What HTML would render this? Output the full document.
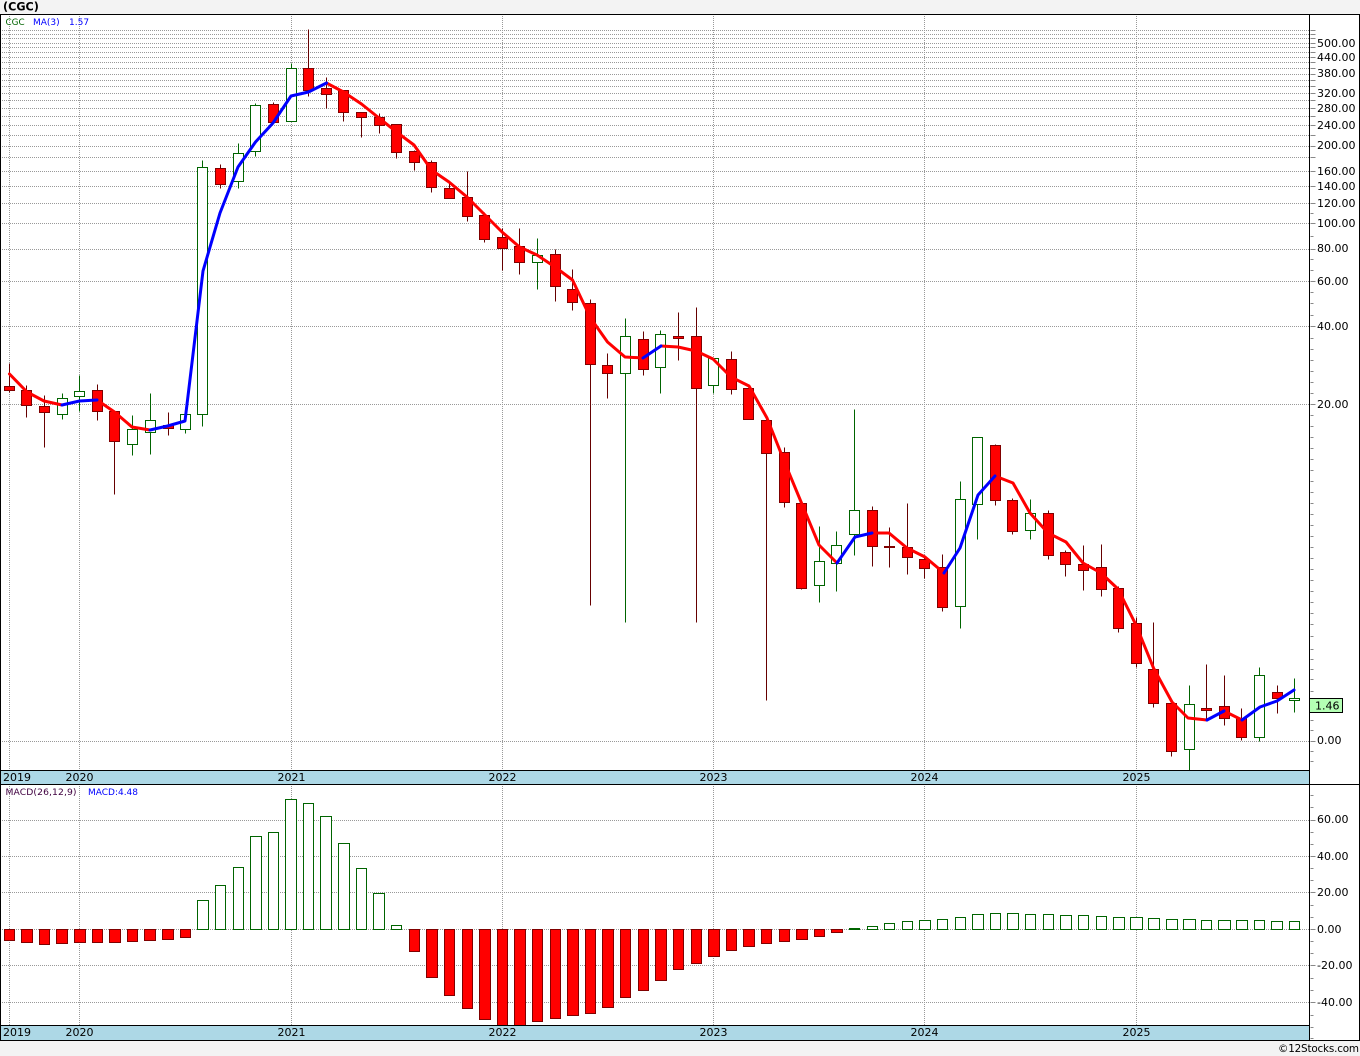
<!DOCTYPE html>
<html><head><meta charset="utf-8"><title>CGC</title>
<style>
html,body{margin:0;padding:0;background:#f3f3f3;width:1360px;height:1056px;overflow:hidden}
svg{display:block}
text{font-family:"DejaVu Sans","Liberation Sans",sans-serif;font-size:11px;fill:#000}
.c{shape-rendering:crispEdges}
</style></head><body>
<svg width="1360" height="1056" viewBox="0 0 1360 1056" xmlns="http://www.w3.org/2000/svg">
<defs>
<pattern id="h" patternUnits="userSpaceOnUse" width="2" height="1"><rect width="1" height="1" fill="#999"/></pattern>
<pattern id="v" patternUnits="userSpaceOnUse" width="1" height="2"><rect width="1" height="1" fill="#999"/></pattern>
</defs>
<rect x="0" y="0" width="1360" height="1056" fill="#f3f3f3"/>
<rect x="1" y="15" width="1358" height="1025" fill="#fff"/>
<text x="3" y="10.5" style="font-weight:bold;font-size:11.2px">(CGC)</text>

<g class="c">
<path fill="url(#h)" d="M1 30h1309v1H1zM1 34h1309v1H1zM1 38h1309v1H1zM1 43h1309v1H1zM1 47h1309v1H1zM1 52h1309v1H1zM1 57h1309v1H1zM1 62h1309v1H1zM1 68h1309v1H1zM1 74h1309v1H1zM1 80h1309v1H1zM1 86h1309v1H1zM1 93h1309v1H1zM1 100h1309v1H1zM1 108h1309v1H1zM1 116h1309v1H1zM1 125h1309v1H1zM1 135h1309v1H1zM1 146h1309v1H1zM1 157h1309v1H1zM1 171h1309v1H1zM1 186h1309v1H1zM1 203h1309v1H1zM1 223h1309v1H1zM1 249h1309v1H1zM1 281h1309v1H1zM1 326h1309v1H1zM1 404h1309v1H1zM1 741h1309v1H1zM1 820h1309v1H1zM1 856h1309v1H1zM1 892h1309v1H1zM1 929h1309v1H1zM1 965h1309v1H1zM1 1002h1309v1H1z"/>
<path fill="url(#v)" d="M9 15h1v755H9zM79 15h1v755h-1zM291 15h1v755h-1zM502 15h1v755h-1zM713 15h1v755h-1zM924 15h1v755h-1zM1136 15h1v755h-1zM9 785h1v240H9zM79 785h1v240h-1zM291 785h1v240h-1zM502 785h1v240h-1zM713 785h1v240h-1zM924 785h1v240h-1zM1136 785h1v240h-1z"/>
</g>

<g class="c" transform="translate(.5,.5)">
<!-- ticks -->
<path fill="none" stroke="#888" d="M1310 30H1315M1310 34H1315M1310 38H1315M1310 43H1315M1310 47H1315M1310 52H1315M1310 57H1315M1310 62H1315M1310 68H1315M1310 74H1315M1310 80H1315M1310 86H1315M1310 93H1315M1310 100H1315M1310 108H1315M1310 116H1315M1310 125H1315M1310 135H1315M1310 146H1315M1310 157H1315M1310 171H1315M1310 186H1315M1310 203H1315M1310 223H1315M1310 249H1315M1310 281H1315M1310 326H1315M1310 404H1315M1310 741H1315M1310 213H1313M1310 236H1313M1310 259H1313M1310 270H1313M1310 292H1313M1310 303H1313M1310 315H1313M1310 338H1313M1310 349H1313M1310 360H1313M1310 371H1313M1310 382H1313M1310 393H1313M1310 415H1313M1310 426H1313M1310 437H1313M1310 448H1313M1310 459H1313M1310 470H1313M1310 481H1313M1310 492H1313M1310 503H1313M1310 514H1313M1310 525H1313M1310 536H1313M1310 547H1313M1310 558H1313M1310 569H1313M1310 580H1313M1310 591H1313M1310 602H1313M1310 613H1313M1310 624H1313M1310 636H1313M1310 649H1313M1310 659H1313M1310 669H1313M1310 679H1313M1310 691H1313M1310 720H1313M1310 730H1313M1310 751H1313M1310 761H1313M1310 795H1313M1310 807H1313M1310 820H1315M1310 832H1313M1310 844H1313M1310 856H1315M1310 868H1313M1310 880H1313M1310 892H1315M1310 905H1313M1310 917H1313M1310 929H1315M1310 941H1313M1310 953H1313M1310 965H1315M1310 978H1313M1310 990H1313M1310 1002H1315M1310 1015H1313M1310 1027H1313M1310 1038H1313"/>

<!-- green candles -->
<path fill="#fff" stroke="#006400" d="M62 393V398M62 414V419M57 398h10V414h-10zM79 375V391M79 396V411M74 391h10V396h-10zM132 415V429M132 444V455M127 429h10V444h-10zM150 393V420M150 432V454M145 420h10V432h-10zM185 407V414M185 429V433M180 414h10V429h-10zM202 160V167M202 414V426M197 167h10V414h-10zM238 143V153M238 181V188M233 153h10V181h-10zM255 103V105M255 151V156M250 105h10V151h-10zM291 63V68M286 68h10V121h-10zM537 238V255M537 262V289M532 255h10V262h-10zM625 318V336M625 373V622M620 336h10V373h-10zM660 330V334M660 367V393M655 334h10V367h-10zM713 385V393M708 358h10V385h-10zM819 526V561M819 585V602M814 561h10V585h-10zM836 531V545M836 563V591M831 545h10V563h-10zM854 409V510M854 534V555M849 510h10V534h-10zM960 481V499M960 606V628M955 499h10V606h-10zM977 504V539M972 437h10V504h-10zM1030 499V513M1030 530V539M1025 513h10V530h-10zM1189 685V704M1189 749V770M1184 704h10V749h-10zM1259 667V675M1259 737V741M1254 675h10V737h-10zM1294 678V698M1294 700V712M1289 698h10V700h-10z"/>

<!-- red wicks -->
<path fill="none" stroke="#660000" d="M9 363V392M26 385V417M44 395V447M97 384V420M114 411V494M168 412V435M220 164V188M273 102V122M308 29V96M326 77V108M343 90V121M361 112V137M379 113V133M396 124V158M414 150V170M431 160V192M449 182V198M467 171V221M484 212V242M502 228V270M519 228V274M555 249V301M572 269V310M590 299V605M607 353V398M643 331V375M678 312V360M696 307V622M731 351V394M748 388V419M766 419V700M784 447V507M801 503V589M872 506V566M889 527V567M907 503V574M924 556V578M942 554V611M995 444V505M1012 498V534M1048 510V559M1065 550V576M1083 545V590M1101 544V596M1118 586V632M1136 617V667M1153 622V707M1171 703V756M1206 664V720M1224 675V725M1241 708V740M1277 685V713"/>
<!-- red bodies -->
<path fill="#f00" stroke="#800000" d="M4 386h10V390h-10zM21 390h10V405h-10zM39 406h10V412h-10zM92 390h10V411h-10zM109 411h10V441h-10zM163 425h10V428h-10zM215 168h10V184h-10zM268 104h10V122h-10zM303 68h10V90h-10zM321 88h10V94h-10zM338 90h10V112h-10zM356 112h10V117h-10zM374 117h10V125h-10zM391 124h10V152h-10zM409 151h10V162h-10zM426 162h10V187h-10zM444 188h10V198h-10zM462 197h10V216h-10zM479 215h10V239h-10zM497 237h10V248h-10zM514 246h10V262h-10zM550 254h10V286h-10zM567 289h10V302h-10zM585 303h10V364h-10zM602 365h10V373h-10zM638 339h10V369h-10zM673 336h10V338h-10zM691 336h10V388h-10zM726 359h10V389h-10zM743 388h10V419h-10zM761 420h10V453h-10zM779 452h10V502h-10zM796 503h10V588h-10zM867 510h10V546h-10zM884 546h10V547h-10zM902 547h10V557h-10zM919 559h10V568h-10zM937 567h10V607h-10zM990 445h10V500h-10zM1007 500h10V531h-10zM1043 513h10V555h-10zM1060 552h10V564h-10zM1078 564h10V570h-10zM1096 567h10V589h-10zM1113 588h10V628h-10zM1131 623h10V663h-10zM1148 669h10V703h-10zM1166 703h10V751h-10zM1201 708h10V710h-10zM1219 706h10V718h-10zM1236 718h10V737h-10zM1272 692h10V698h-10z"/>

<!-- MACD green -->
<path fill="#fff" stroke="#006400" d="M197 900h11V929H197zM215 885h10V929h-10zM233 867h10V929h-10zM250 836h11V929h-11zM268 832h10V929h-10zM285 799h11V929h-11zM303 803h10V929h-10zM320 816h11V929h-11zM338 843h11V929h-11zM356 868h10V929h-10zM373 893h11V929h-11zM391 925h10V929h-10zM849 928h10V929h-10zM867 926h10V929h-10zM884 923h10V929h-10zM902 921h10V929h-10zM919 920h11V929h-11zM937 919h10V929h-10zM955 917h10V929h-10zM972 914h11V929h-11zM990 913h10V929h-10zM1007 913h11V929h-11zM1025 914h10V929h-10zM1043 914h10V929h-10zM1060 915h11V929h-11zM1078 915h10V929h-10zM1096 916h10V929h-10zM1113 917h11V929h-11zM1130 917h12V929h-12zM1148 918h11V929h-11zM1166 919h11V929h-11zM1183 919h12V929h-12zM1201 920h10V929h-10zM1218 920h12V929h-12zM1236 920h11V929h-11zM1254 920h10V929h-10zM1271 921h11V929h-11zM1289 921h10V929h-10z"/>
<!-- MACD red -->
<path fill="#f00" stroke="#800000" d="M4 929h10V940h-10zM21 929h11V942h-11zM39 929h10V944h-10zM56 929h11V943h-11zM74 929h11V942h-11zM92 929h10V942h-10zM109 929h11V942h-11zM127 929h10V941h-10zM144 929h11V940h-11zM162 929h11V939h-11zM180 929h10V937h-10zM409 929h10V951h-10zM426 929h11V977h-11zM444 929h10V995h-10zM462 929h10V1008h-10zM479 929h11V1019h-11zM497 929h10V1030h-10zM514 929h11V1030h-11zM532 929h10V1021h-10zM550 929h10V1018h-10zM567 929h11V1015h-11zM585 929h10V1013h-10zM602 929h11V1007h-11zM620 929h10V997h-10zM638 929h10V990h-10zM655 929h11V980h-11zM673 929h10V969h-10zM691 929h10V963h-10zM708 929h11V956h-11zM726 929h10V950h-10zM743 929h11V946h-11zM761 929h10V943h-10zM779 929h10V941h-10zM796 929h11V939h-11zM814 929h10V936h-10zM831 929h11V932h-11z"/>
</g>

<!-- MA line -->
<g fill="none" stroke-width="3" stroke-linejoin="round" stroke-linecap="round">
<polyline stroke="#f00" points="9.5,374 27,392 44,401 62,405"/>
<polyline stroke="#f00" points="97,400 114.5,412 132,427 150,430"/>
<polyline stroke="#f00" points="326.5,83 343.5,92 361.5,104 379,118 396.5,132 414,145 431.5,170 449,182 467,197 485,215 502,232 519.5,247 537,255 555,267 572.5,280 590.5,318 607.5,342 625,357 643,358"/>
<polyline stroke="#f00" points="661,346 678,347 696,351 713,359 731,377 749,386 767,418 784.5,462 801.5,503 819,545 837,563"/>
<polyline stroke="#f00" points="872,533 889,533 907,548 925,557 944,573"/>
<polyline stroke="#f00" points="995,476 1013,483 1030,513 1048,533 1066,542 1083,563 1101,573 1118,589 1136,625 1153.5,668 1172,702 1188,718 1207,720"/>
<polyline stroke="#f00" points="1224,711 1242,720"/>
<polyline stroke="#00f" points="62,405 79.5,401 97,400"/>
<polyline stroke="#00f" points="150,430 167.5,426 185,421 203,271 220,213 238,167 255.5,142 273,123 291,96 308.5,92 326.5,83"/>
<polyline stroke="#00f" points="643,358 661,346"/>
<polyline stroke="#00f" points="837,563 855,537 872,533"/>
<polyline stroke="#00f" points="944,573 960,548 978,495 995,476"/>
<polyline stroke="#00f" points="1207,720 1224,711"/>
<polyline stroke="#00f" points="1242,720 1260,707 1277,701 1294,690"/>
</g>

<g class="c">
<!-- date strips -->
<rect x="1" y="771" width="1308" height="13" fill="#add8e6"/>
<rect x="1" y="1026" width="1308" height="14" fill="#add8e6"/>
<!-- frame -->
<path fill="#000" d="M0 14H1360V15H0zM0 14H1V1041H0zM1309 14H1310V1041H1309zM1359 14H1360V1041H1359zM0 770H1310V771H0zM0 784H1360V785H0zM0 1025H1310V1026H0zM0 1040H1360V1041H0z"/>
<!-- price label -->
<rect x="1309.5" y="698.5" width="33" height="14" fill="#b4ffb4" stroke="#000"/>
</g>

<text x="1315" y="709.5">1.46</text>
<g>
<text x="1317" y="47">500.00</text>
<text x="1317" y="61">440.00</text>
<text x="1317" y="77">380.00</text>
<text x="1317" y="97">320.00</text>
<text x="1317" y="112">280.00</text>
<text x="1317" y="129">240.00</text>
<text x="1317" y="149">200.00</text>
<text x="1317" y="175">160.00</text>
<text x="1317" y="190">140.00</text>
<text x="1317" y="207">120.00</text>
<text x="1317" y="227">100.00</text>
<text x="1317" y="252">80.00</text>
<text x="1317" y="285">60.00</text>
<text x="1317" y="330">40.00</text>
<text x="1317" y="408">20.00</text>
<text x="1317" y="744">0.00</text>
<text x="1317" y="823">60.00</text>
<text x="1317" y="860">40.00</text>
<text x="1317" y="896">20.00</text>
<text x="1317" y="933">0.00</text>
<text x="1317" y="969">-20.00</text>
<text x="1317" y="1006">-40.00</text>
</g>
<text x="3" y="781">2019</text>
<text x="65.5" y="781">2020</text>
<text x="277.5" y="781">2021</text>
<text x="488.5" y="781">2022</text>
<text x="699.5" y="781">2023</text>
<text x="910.5" y="781">2024</text>
<text x="1122.5" y="781">2025</text>
<text x="3" y="1036">2019</text>
<text x="65.5" y="1036">2020</text>
<text x="277.5" y="1036">2021</text>
<text x="488.5" y="1036">2022</text>
<text x="699.5" y="1036">2023</text>
<text x="910.5" y="1036">2024</text>
<text x="1122.5" y="1036">2025</text>

<text x="5.5" y="25" style="font-size:8.8px;fill:#006400">CGC</text>
<text x="33" y="25" style="font-size:9px;fill:#0000ff">MA(3)</text>
<text x="69" y="25" style="font-size:9px;fill:#0000ff">1.57</text>
<text x="5.5" y="795" textLength="71" style="font-size:9.2px;fill:#400040">MACD(26,12,9)</text>
<text x="88" y="795" textLength="50" style="font-size:9px;fill:#0000ff">MACD:4.48</text>
<text x="1278" y="1052" textLength="81" style="font-size:10.4px">©12Stocks.com</text>
</svg>
</body></html>
